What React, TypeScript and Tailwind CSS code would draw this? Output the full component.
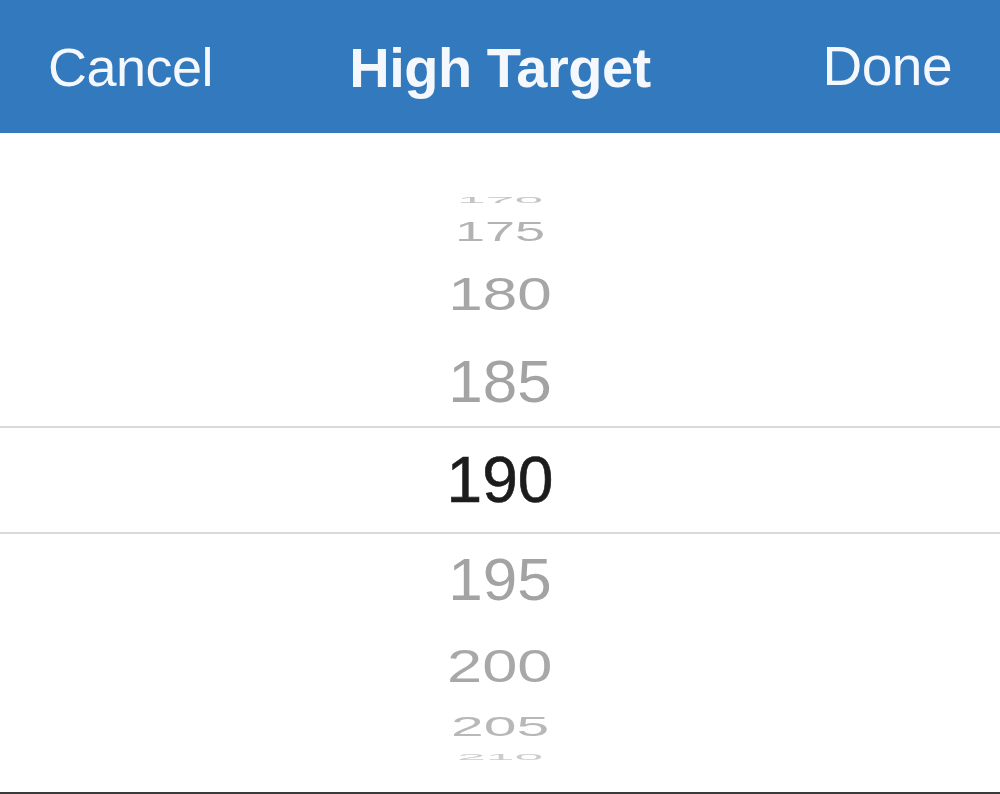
const rows = [
  { v: '170', h: 'h-[28px]', cls: 'text-[60px] text-[#c4c4c4] scale-x-[0.86] scale-y-[0.14] blur-[0.6px]' },
  { v: '175', h: 'h-[36px]', cls: 'text-[60px] text-[#b3b3b3] scale-x-[0.9] scale-y-[0.46] blur-[0.4px]' },
  { v: '180', h: 'h-[88px]', cls: 'text-[62px] text-[#a6a6a6] scale-y-[0.74] blur-[0.3px]' },
  { v: '185', h: 'h-[88px]', cls: 'text-[62px] text-[#a3a3a3] scale-y-[0.95] blur-[0.2px]' },
  { v: '190', h: 'h-[108px]', cls: 'text-[64px] text-[#1c1c1c] [-webkit-text-stroke:0.6px_#1c1c1c]', selected: true },
  { v: '195', h: 'h-[92px]', cls: 'text-[62px] text-[#a3a3a3] scale-y-[0.95] blur-[0.2px]' },
  { v: '200', h: 'h-[80px]', cls: 'text-[62px] text-[#a8a8a8] scale-x-[1.02] scale-y-[0.74] blur-[0.3px]' },
  { v: '205', h: 'h-[42px]', cls: 'text-[60px] text-[#b8b8b8] scale-x-[0.98] scale-y-[0.46] blur-[0.4px]' },
  { v: '210', h: 'h-[18px]', cls: 'text-[60px] text-[#cccccc] scale-x-[0.86] scale-y-[0.14] blur-[0.6px]' },
];

export default function App() {
  return (
    <div className="flex h-[794px] w-[1000px] flex-col overflow-hidden bg-white font-['Liberation_Sans',Arial,sans-serif]">
      <header className="relative flex h-[133px] shrink-0 items-center justify-between bg-[#3379bd] pl-[48px] pr-[48px] text-[#f4f7fb]">
        <button className="text-[54px] leading-none tracking-[-0.5px]">Cancel</button>
        <h1 className="absolute left-1/2 top-[40px] -translate-x-1/2 text-[56px] font-bold leading-none tracking-[-0.5px]">
          High Target
        </h1>
        <button className="text-[55px] leading-none tracking-[-0.5px]">Done</button>
      </header>

      <div className="flex flex-1 flex-col pt-[53px]">
        {rows.map((r) => (
          <div
            key={r.v}
            className={`${r.h} flex items-center justify-center ${
              r.selected ? 'border-y-2 border-[#dadada]' : ''
            }`}
          >
            <span className={`inline-block leading-none ${r.cls}`}>{r.v}</span>
          </div>
        ))}
      </div>

      <div className="h-[2px] shrink-0 bg-[#3a3a3a]" />
    </div>
  );
}
